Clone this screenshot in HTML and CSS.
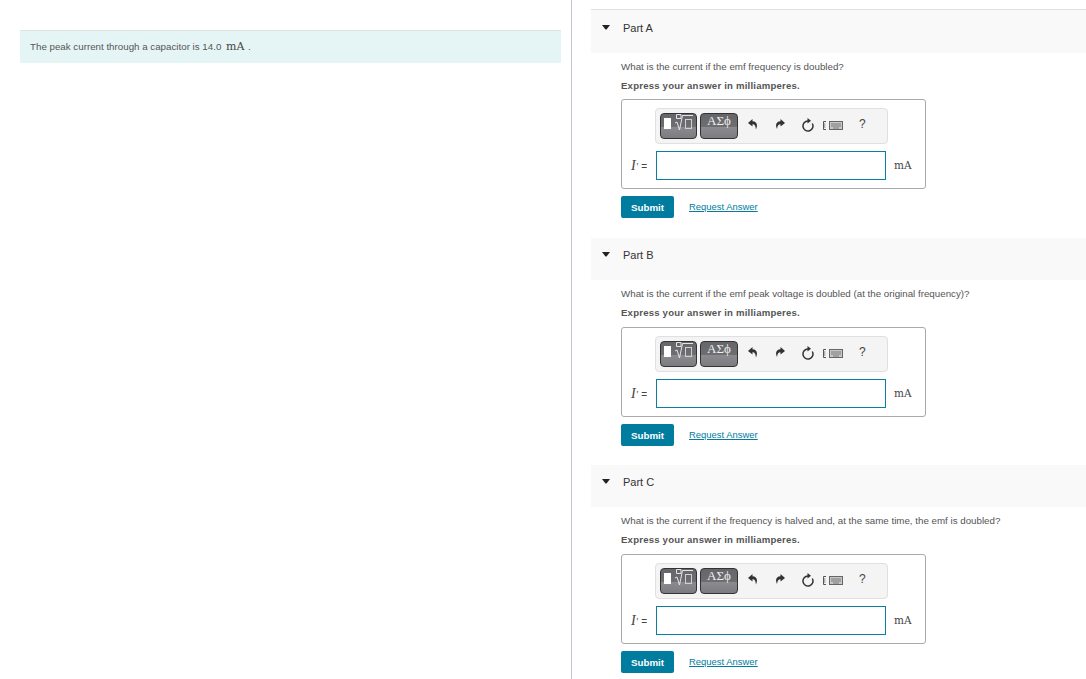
FILE: index.html
```html
<!DOCTYPE html>
<html lang="en">
<head>
<meta charset="utf-8">
<title>Capacitor current</title>
<link rel="stylesheet" href="styles.css">
</head>
<body>
<div class="page">
  <aside class="left">
    <div class="intro">The peak current through a capacitor is 14.0 <span class="unit">mA</span> .</div>
  </aside>
  <main class="right">
    <section class="part first">
      <header class="part-head"><svg class="caret" viewBox="0 0 8 5"><path d="M0 0H8L4.500 4.500H3.500Z"/></svg><span>Part A</span></header>
      <div class="part-body">
        <p class="q">What is the current if the emf frequency is doubled?</p>
        <p class="ex">Express your answer in milliamperes.</p>
        <div class="answer">
          <div class="toolbar">
            <span class="tb-btn tb-math"><svg class="math-ic" viewBox="0 0 35 23"><rect x="3" y="4" width="7" height="11" fill="#fff"/><path d="M15.500 .5H20V4.500H15.500ZM14 9 16 8 18.500 16 21.500 1.500H32" fill="none" stroke="#e4e4e4"/><rect x="24.500" y="5.500" width="6" height="9" fill="none" stroke="#d0d0d0"/></svg></span>
            <span class="tb-btn tb-greek">ΑΣϕ</span>
            <svg class="ic i-undo" viewBox="0 0 10 12"><path d="M4.500 1 0 5 4.500 8.500V6.200C6.500 6.200 7.500 7.500 8 11.500 10.200 6.500 8.500 3.300 4.500 3.200Z"/></svg>
            <svg class="ic i-redo" viewBox="0 0 10 12"><path d="M5.500 1 10 5 5.500 8.500V6.200C3.500 6.200 2.500 7.500 2 11 -.2 6.500 1.500 3.300 5.500 3.200Z"/></svg>
            <svg class="ic i-reset" viewBox="0 0 12 14"><path d="M6 3A5 5 0 1 0 10.300 5.500" fill="none" stroke="#333" stroke-width="1.500"/><path d="M5.500 0 9 2.800 5.500 5.500Z"/></svg>
            <svg class="ic i-kbd" viewBox="0 0 20 9"><path d="M3 .5H.5V8.500H3" fill="none" stroke="#555"/><path d="M1.800 2V7" stroke="#999"/><rect x="6.500" y=".5" width="13" height="8" fill="#c8c8c8" stroke="#666"/><path d="M8 3H18M8 5H18M10 7H16" stroke="#666" stroke-width=".8"/></svg>
            <span class="help">?</span>
          </div>
          <div class="input-row">
            <span class="var"><i>I</i><i class="prime">′</i> <span class="eq">=</span></span>
            <span class="field"></span>
            <span class="unit-r">mA</span>
          </div>
        </div>
        <div class="actions"><button class="submit">Submit</button><a class="req" href="#">Request Answer</a></div>
      </div>
    </section>
    <section class="part">
      <header class="part-head"><svg class="caret" viewBox="0 0 8 5"><path d="M0 0H8L4.500 4.500H3.500Z"/></svg><span>Part B</span></header>
      <div class="part-body">
        <p class="q">What is the current if the emf peak voltage is doubled (at the original frequency)?</p>
        <p class="ex">Express your answer in milliamperes.</p>
        <div class="answer">
          <div class="toolbar">
            <span class="tb-btn tb-math"><svg class="math-ic" viewBox="0 0 35 23"><rect x="3" y="4" width="7" height="11" fill="#fff"/><path d="M15.500 .5H20V4.500H15.500ZM14 9 16 8 18.500 16 21.500 1.500H32" fill="none" stroke="#e4e4e4"/><rect x="24.500" y="5.500" width="6" height="9" fill="none" stroke="#d0d0d0"/></svg></span>
            <span class="tb-btn tb-greek">ΑΣϕ</span>
            <svg class="ic i-undo" viewBox="0 0 10 12"><path d="M4.500 1 0 5 4.500 8.500V6.200C6.500 6.200 7.500 7.500 8 11.500 10.200 6.500 8.500 3.300 4.500 3.200Z"/></svg>
            <svg class="ic i-redo" viewBox="0 0 10 12"><path d="M5.500 1 10 5 5.500 8.500V6.200C3.500 6.200 2.500 7.500 2 11 -.2 6.500 1.500 3.300 5.500 3.200Z"/></svg>
            <svg class="ic i-reset" viewBox="0 0 12 14"><path d="M6 3A5 5 0 1 0 10.300 5.500" fill="none" stroke="#333" stroke-width="1.500"/><path d="M5.500 0 9 2.800 5.500 5.500Z"/></svg>
            <svg class="ic i-kbd" viewBox="0 0 20 9"><path d="M3 .5H.5V8.500H3" fill="none" stroke="#555"/><path d="M1.800 2V7" stroke="#999"/><rect x="6.500" y=".5" width="13" height="8" fill="#c8c8c8" stroke="#666"/><path d="M8 3H18M8 5H18M10 7H16" stroke="#666" stroke-width=".8"/></svg>
            <span class="help">?</span>
          </div>
          <div class="input-row">
            <span class="var"><i>I</i><i class="prime">′</i> <span class="eq">=</span></span>
            <span class="field"></span>
            <span class="unit-r">mA</span>
          </div>
        </div>
        <div class="actions"><button class="submit">Submit</button><a class="req" href="#">Request Answer</a></div>
      </div>
    </section>
    <section class="part">
      <header class="part-head"><svg class="caret" viewBox="0 0 8 5"><path d="M0 0H8L4.500 4.500H3.500Z"/></svg><span>Part C</span></header>
      <div class="part-body">
        <p class="q">What is the current if the frequency is halved and, at the same time, the emf is doubled?</p>
        <p class="ex">Express your answer in milliamperes.</p>
        <div class="answer">
          <div class="toolbar">
            <span class="tb-btn tb-math"><svg class="math-ic" viewBox="0 0 35 23"><rect x="3" y="4" width="7" height="11" fill="#fff"/><path d="M15.500 .5H20V4.500H15.500ZM14 9 16 8 18.500 16 21.500 1.500H32" fill="none" stroke="#e4e4e4"/><rect x="24.500" y="5.500" width="6" height="9" fill="none" stroke="#d0d0d0"/></svg></span>
            <span class="tb-btn tb-greek">ΑΣϕ</span>
            <svg class="ic i-undo" viewBox="0 0 10 12"><path d="M4.500 1 0 5 4.500 8.500V6.200C6.500 6.200 7.500 7.500 8 11.500 10.200 6.500 8.500 3.300 4.500 3.200Z"/></svg>
            <svg class="ic i-redo" viewBox="0 0 10 12"><path d="M5.500 1 10 5 5.500 8.500V6.200C3.500 6.200 2.500 7.500 2 11 -.2 6.500 1.500 3.300 5.500 3.200Z"/></svg>
            <svg class="ic i-reset" viewBox="0 0 12 14"><path d="M6 3A5 5 0 1 0 10.300 5.500" fill="none" stroke="#333" stroke-width="1.500"/><path d="M5.500 0 9 2.800 5.500 5.500Z"/></svg>
            <svg class="ic i-kbd" viewBox="0 0 20 9"><path d="M3 .5H.5V8.500H3" fill="none" stroke="#555"/><path d="M1.800 2V7" stroke="#999"/><rect x="6.500" y=".5" width="13" height="8" fill="#c8c8c8" stroke="#666"/><path d="M8 3H18M8 5H18M10 7H16" stroke="#666" stroke-width=".8"/></svg>
            <span class="help">?</span>
          </div>
          <div class="input-row">
            <span class="var"><i>I</i><i class="prime">′</i> <span class="eq">=</span></span>
            <span class="field"></span>
            <span class="unit-r">mA</span>
          </div>
        </div>
        <div class="actions"><button class="submit">Submit</button><a class="req" href="#">Request Answer</a></div>
      </div>
    </section>
  </main>
</div>
</body>
</html>
```
FILE: styles.css
```css
html, body { margin: 0; padding: 0; height: 100%; overflow: hidden; background: #fff; }
body { font-family: "Liberation Sans", Arial, sans-serif; color: #333; }
.page { display: flex; height: 679px; }
.left { width: 571px; flex: none; border-right: 1px solid #c3cad6; padding-top: 30px; }
.intro { margin: 0 10px 0 20px; height: 32px; line-height: 32px; padding-left: 10px; background: #e5f5f5; border-top: 1px solid #dfe3e3; font-size: 9.75px; color: #555; }
.unit { font-family: "DejaVu Serif", serif; font-size: 11px; margin: 0 1px 0 2px; color: #444; }
.right { flex: 1; padding: 9px 0 0 19px; min-width: 0; }
.part { margin-bottom: 19px; }
.part-head { position: relative; height: 42px; box-sizing: border-box; background: #f9f9f9; padding: 10px 0 0 32px; font-size: 11px; line-height: 14px; color: #333; }
.first { margin-bottom: 20px; }
.first .part-head { height: 44px; border-top: 1px solid #e2e2e2; padding-top: 11px; }
.caret { position: absolute; left: 11px; top: 14px; width: 8px; height: 5px; fill: #222; }
.first .caret { top: 15px; }
.part-body { padding: 7px 0 0 30px; }
.q { margin: 0; font-size: 9.75px; line-height: 14px; color: #555; }
.ex { margin: 5px 0 0; font-size: 9.6px; line-height: 14px; font-weight: 700; color: #555; letter-spacing: .2px; }
.answer { margin-top: 7px; width: 305px; height: 90px; box-sizing: border-box; border: 1px solid #aaa; border-radius: 3px; padding-top: 8px; }
.first .answer { margin-top: 6px; }
.toolbar { display: flex; align-items: center; width: 233px; height: 36px; box-sizing: border-box; margin-left: 33px; background: #f4f4f4; border: 1px solid #e0e0e0; border-radius: 4px; padding-left: 4px; }
.tb-btn { display: block; flex: none; box-sizing: border-box; height: 26px; border: 1px solid #333; border-radius: 4px; background: linear-gradient(#66666a 0, #6e6e72 52%, #8b8b8f 56%, #7c7c80 100%); color: #eee; overflow: hidden; }
.tb-math { width: 37px; }
.math-ic { display: block; width: 35px; height: 23px; }
.tb-greek { width: 38px; margin-left: 3px; text-align: center; font-family: "Liberation Serif", serif; font-size: 13px; line-height: 14px; }
.ic { fill: #333; flex: none; }
.i-undo { margin-left: 10px; width: 10px; height: 12px; margin-bottom: 4px; }
.i-redo { margin-left: 17px; width: 10px; height: 12px; margin-bottom: 4px; }
.i-reset { margin-left: 17px; width: 12px; height: 14px; margin-bottom: 3px; }
.i-kbd { margin-left: 9px; width: 20px; height: 9px; margin-bottom: 1px; }
.help { margin-left: 16px; margin-bottom: 5px; font-size: 12px; color: #444; line-height: 14px; }
.input-row { display: flex; align-items: center; margin: 7px 0 0 9px; height: 29px; }
.var { width: 25px; flex: none; font-family: "Liberation Serif", serif; font-size: 14px; color: #444; white-space: nowrap; }
.prime { font-size: 10px; }
.eq { font-family: "Liberation Sans", sans-serif; font-size: 10px; }
.field { width: 230px; height: 29px; box-sizing: border-box; border: 1px solid #0a7fa0; background: #fff; flex: none; }
.unit-r { margin: 0 0 2px 8px; font-family: "DejaVu Serif", serif; font-size: 10.500px; color: #444; }
.actions { display: flex; align-items: center; margin-top: 7px; height: 22px; }
.submit { width: 53px; height: 22px; padding: 0; border: 0; border-radius: 2px; background: #007c9e; color: #fff; font: 700 9.75px "Liberation Sans", sans-serif; }
.req { margin: 0 0 2px 15px; font-size: 9.45px; color: #007c9e; text-decoration: underline; }
```
